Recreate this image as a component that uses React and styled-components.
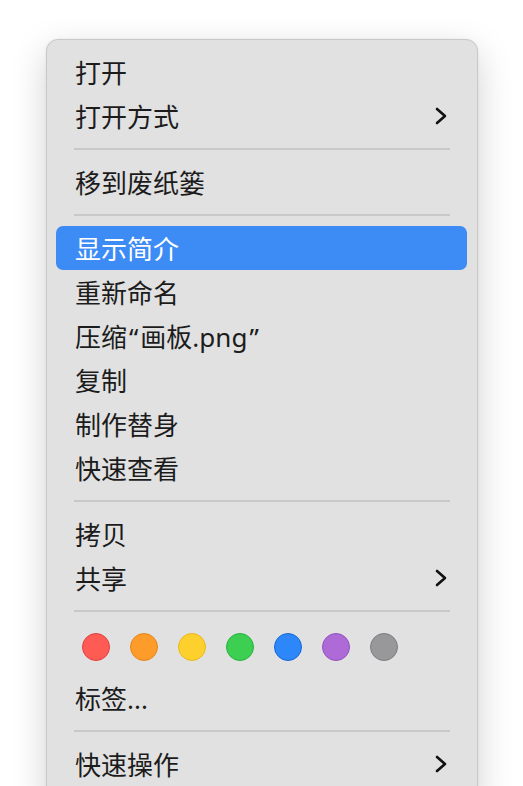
import React from 'react'
import styled, { createGlobalStyle } from 'styled-components'

const GlobalStyle = createGlobalStyle`
  html, body {
    margin: 0;
    padding: 0;
    background: #ffffff;
    overflow: hidden;
  }
  body {
    font-family: "Noto Sans", "Noto Sans CJK SC", sans-serif;
  }
`

const Page = styled.div`
  width: 523px;
  height: 786px;
  padding: 39px 0 0 46px;
  box-sizing: border-box;
  overflow: hidden;
`

const Menu = styled.div`
  width: 432px;
  box-sizing: border-box;
  background: #e1e1e1;
  border: 1px solid #c8c8c8;
  border-radius: 12px;
  box-shadow: 0 12px 36px rgba(0, 0, 0, 0.18), 0 0 3px rgba(0, 0, 0, 0.06);
  padding: 10px 10px 20px 9px;
  display: flex;
  flex-direction: column;
`

const Row = styled.div`
  height: 44px;
  display: flex;
  align-items: center;
  justify-content: space-between;
  padding: 0 20px 0 19px;
  border-radius: 7px;
  font-size: 26px;
  color: ${p => (p.$active ? '#ffffff' : '#1c1c1c')};
  background: ${p => (p.$active ? '#3d8bf5' : 'transparent')};
`

const Quote = styled.span`
  margin: 0 2px;
`

const Separator = styled.div`
  height: 2px;
  margin: 10px 17px 10px 18px;
  background: #c9c9c9;
`

const Chevron = styled.svg`
  width: 14px;
  height: 18px;
  margin-right: -1px;
  flex: none;
`

const Colors = styled.div`
  height: 54px;
  box-sizing: border-box;
  display: flex;
  align-items: flex-start;
  gap: 20px;
  padding: 11px 0 0 26px;
`

const Dot = styled.span`
  width: 26px;
  height: 26px;
  border-radius: 50%;
  background: ${p => p.$fill};
  border: 1px solid ${p => p.$edge};
  flex: none;
`

const Arrow = () => (
  <Chevron viewBox="0 0 14 18">
    <polyline
      points="3,2 11,9 3,16"
      fill="none"
      stroke="#111"
      strokeWidth="2.6"
      strokeLinecap="round"
      strokeLinejoin="round"
    />
  </Chevron>
)

const dots = [
  ['#fe5b55', '#e2403b'],
  ['#fd9c2a', '#e4861a'],
  ['#fdd02e', '#e8b91c'],
  ['#3ccf52', '#29b13d'],
  ['#2d87f8', '#1668d8'],
  ['#ae6bd8', '#9151bf'],
  ['#98989b', '#7c7c80'],
]

const App = () => {
  return (
    <Page>
      <GlobalStyle />
      <Menu>
        <Row>打开</Row>
        <Row>打开方式<Arrow /></Row>
        <Separator />
        <Row>移到废纸篓</Row>
        <Separator />
        <Row $active>显示简介</Row>
        <Row>重新命名</Row>
        <Row><span>压缩<Quote>“</Quote>画板.png<Quote>”</Quote></span></Row>
        <Row>复制</Row>
        <Row>制作替身</Row>
        <Row>快速查看</Row>
        <Separator />
        <Row>拷贝</Row>
        <Row>共享<Arrow /></Row>
        <Separator />
        <Colors>
          {dots.map(([fill, edge]) => (
            <Dot key={fill} $fill={fill} $edge={edge} />
          ))}
        </Colors>
        <Row>标签...</Row>
        <Separator />
        <Row>快速操作<Arrow /></Row>
      </Menu>
    </Page>
  )
}

export default App
